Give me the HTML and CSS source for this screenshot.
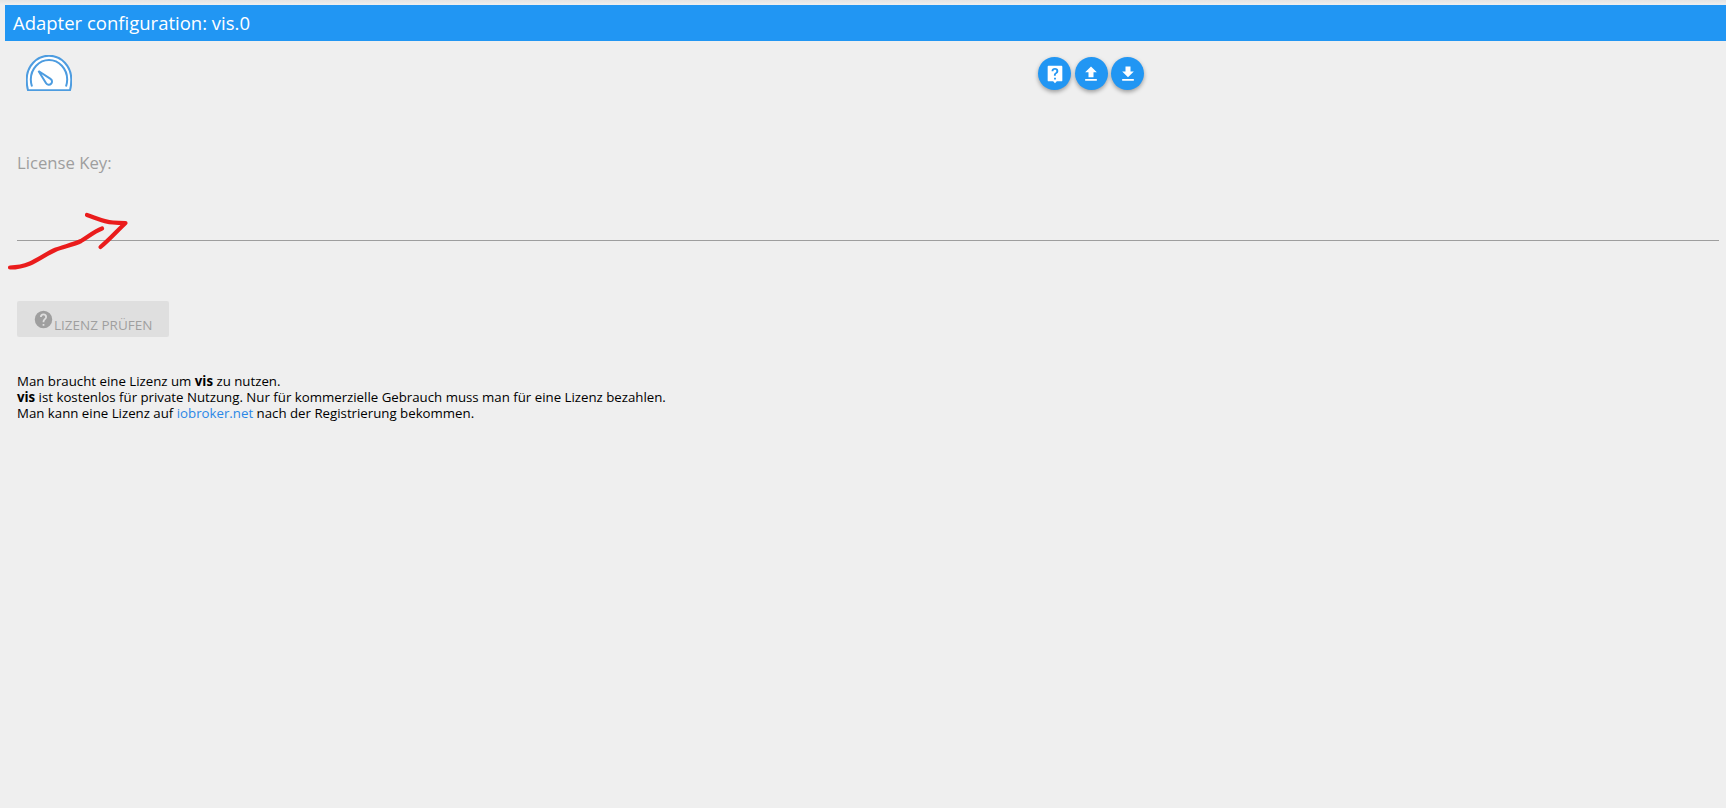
FILE: index.html
```html
<!DOCTYPE html>
<html lang="de">
<head>
<meta charset="utf-8">
<title>Adapter configuration: vis.0</title>
<link rel="stylesheet" href="styles.css">
</head>
<body>
<header class="title-bar">Adapter configuration: vis.0</header>
<div class="toolbar">
  <svg class="logo" viewBox="0 0 46 36" aria-hidden="true">
    <path class="logo-fill" d="M2 35.200C.8 31.500.7 28.500.7 24.500.7 11.500 10.500.7 23 .7s22.300 10.800 22.300 23.800c0 4-.1 7-1.300 10.700z"/>
    <path class="logo-line" d="M2 35.200C.8 31.500.7 28.500.7 24.500.7 11.500 10.500.7 23 .7s22.300 10.800 22.300 23.800c0 4-.1 7-1.300 10.700z"/>
    <path class="logo-line" d="M6 31.500C5 28.500 4.800 26.500 4.800 24.500 4.800 13.800 13 5 23 5s18.200 8.800 18.200 19.500c0 2-.2 4-1.200 7"/>
    <path class="logo-line" d="M12.500 16 24.500 23.800a3.200 3.200 0 1 1-4.400 4.400z"/>
  </svg>
  <div class="actions">
    <button class="fab" type="button" aria-label="Help">
      <svg class="fab-help" viewBox="0 0 24 24"><path d="M5 3h14a1 1 0 0 1 1 1v15a1 1 0 0 1-1 1h-5l-2 2-2-2H5a1 1 0 0 1-1-1V4a1 1 0 0 1 1-1zm6 13v2h2v-2zm1-10.500c-2.200 0-3.700 1.300-3.800 3.400h2c.1-1 .7-1.600 1.700-1.600 1 0 1.600.5 1.600 1.400 0 .8-.4 1.200-1.200 1.800-1.200.8-1.500 1.500-1.500 3v.3h2v-.3c0-.8.200-1.200 1-1.700 1.100-.8 1.800-1.600 1.800-3.100 0-2.200-1.500-3.200-3.600-3.200z" fill-rule="evenodd"/></svg>
    </button>
    <button class="fab" type="button" aria-label="Upload">
      <svg viewBox="0 0 24 24"><path d="M9 16v-6H5l7-7 7 7h-4v6zm-4 2h14v2H5z"/></svg>
    </button>
    <button class="fab" type="button" aria-label="Download">
      <svg viewBox="0 0 24 24"><path d="M19 9h-4V3H9v6H5l7 7zM5 18v2h14v-2z"/></svg>
    </button>
  </div>
</div>
<main class="content">
  <label class="field-label" for="license">License Key:</label>
  <input class="field-input" id="license" type="text">
  <button class="check-btn" type="button">
    <svg class="check-icon" viewBox="0 0 24 24"><path d="M12 2a10 10 0 1 0 0 20 10 10 0 0 0 0-20zm1 17h-2v-2h2zm2.100-7.700-.9.900c-.7.700-1.200 1.300-1.200 2.800h-2v-.5c0-1.100.5-2.100 1.200-2.800l1.200-1.300c.4-.3.600-.8.600-1.400a2 2 0 0 0-4 0H8a4 4 0 0 1 8 0c0 .9-.4 1.700-.9 2.300z" fill-rule="evenodd"/></svg>
    <span>LIZENZ PRÜFEN</span>
  </button>
  <p class="info">
    Man braucht eine Lizenz um <b>vis</b> zu nutzen.<br>
    <b>vis</b> ist kostenlos für private Nutzung. Nur für kommerzielle Gebrauch muss man für eine Lizenz bezahlen.<br>
    Man kann eine Lizenz auf <a href="#">iobroker.net</a> nach der Registrierung bekommen.
  </p>
</main>
<svg class="scribble" viewBox="0 0 140 280" aria-hidden="true">
  <path d="M10 267.500C18 267.500 24 266 30 263.500 38 260 46 254 56 249.500 64 246.500 74 244.500 81 241 88 237 94 231.500 102 228.500"/>
  <path d="M87 215C96 218 104 222 113 222.500 118 223 121 223 125.500 223 117 231 109 240 100.500 247"/>
</svg>
</body>
</html>
```
FILE: styles.css
```css
html, body {
  margin: 0;
  height: 100%;
}
body {
  box-sizing: border-box;
  min-height: 808px;
  padding-top: 5px;
  overflow: hidden;
  background: linear-gradient(#e4e4e4, #efefef 5px);
  font-family: "Open Sans", "Noto Sans", sans-serif;
  color: #000;
}
.title-bar {
  height: 36px;
  margin-left: 5px;
  padding-left: 8px;
  background: #2196f3;
  color: #fff;
  font-size: 18.500px;
  line-height: 36px;
}
.toolbar {
  display: flex;
  height: 64px;
  padding: 14px 0 0 26px;
  box-sizing: border-box;
  position: relative;
}
.logo {
  width: 46px;
  height: 36px;
  flex: none;
}
.logo-fill { fill: #fff; }
.logo-line {
  fill: none;
  stroke: #4d9ce0;
  stroke-width: 2;
}
.actions {
  display: flex;
  gap: 3.500px;
  margin: 2px 0 0 966px;
}
.fab {
  display: flex;
  align-items: center;
  justify-content: center;
  width: 33px;
  height: 33px;
  padding: 0;
  border: 0;
  border-radius: 50%;
  background: #2196f3;
  box-shadow: 0 2px 4px rgba(0, 0, 0, .35);
}
.fab svg {
  display: block;
  width: 20px;
  height: 20px;
  fill: #fff;
}
.fab .fab-help {
  width: 22px;
  height: 22px;
}
.content {
  display: flex;
  flex-direction: column;
  align-items: flex-start;
  padding: 0 0 0 17px;
}
.field-label {
  margin-top: 46.500px;
  color: #9e9e9e;
  font-size: 16.700px;
  line-height: 22px;
}
.field-input {
  box-sizing: border-box;
  width: 1702px;
  height: 30px;
  margin-top: 37px;
  padding: 0;
  border: 0;
  border-bottom: 1px solid #9e9e9e;
  background: transparent;
}
.check-btn {
  display: flex;
  align-items: flex-end;
  box-sizing: border-box;
  width: 152px;
  height: 36px;
  margin-top: 60px;
  padding: 0 0 2px 17px;
  border: 0;
  border-radius: 2px;
  background: #dfdfdf;
  color: #9f9f9f;
  font-family: inherit;
  font-size: 13.500px;
  font-weight: 500;
  line-height: 20px;
}
.check-icon {
  width: 21px;
  height: 21px;
  margin: 0 0 5px -1px;
  flex: none;
  fill: #9f9f9f;
}
.info {
  margin: 36px 0 0;
  font-size: 13.250px;
  line-height: 16px;
}
.info b { font-weight: 700; }
.info a {
  color: #2b87e6;
  text-decoration: none;
}
.scribble {
  position: absolute;
  top: 0;
  left: 0;
  width: 140px;
  height: 280px;
  fill: none;
  stroke: #ea1c1c;
  stroke-width: 4.200;
  stroke-linecap: round;
  stroke-linejoin: round;
}
```
